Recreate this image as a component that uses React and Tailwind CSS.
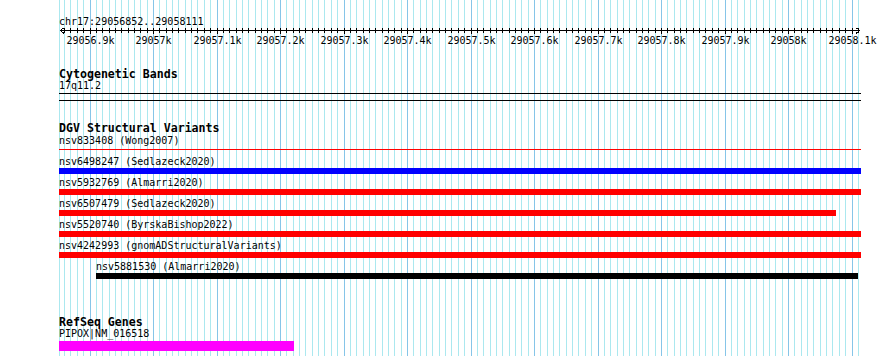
import React from "react";

// 100bp = 63.5px, column of the 29056.9k tick is x=90
const toX = (pos) => Math.floor(90 + (pos - 29056900) * 0.635);

const variants = [
  { id: "nsv6498247", study: "Sedlazeck2020", x1: 59, x2: 861, color: "bg-[#0000ff]" },
  { id: "nsv5932769", study: "Almarri2020", x1: 59, x2: 861, color: "bg-[#ff0000]" },
  { id: "nsv6507479", study: "Sedlazeck2020", x1: 59, x2: 836, color: "bg-[#ff0000]" },
  { id: "nsv5520740", study: "ByrskaBishop2022", x1: 59, x2: 861, color: "bg-[#ff0000]" },
  { id: "nsv4242993", study: "gnomADStructuralVariants", x1: 59, x2: 861, color: "bg-[#ff0000]" },
  { id: "nsv5881530", study: "Almarri2020", x1: 96, x2: 858, color: "bg-black" },
];

const tickLabel = (p) => {
  const k = p / 1000;
  return `${Number.isInteger(k) ? k : k.toFixed(1)}k`;
};

const positions = [];
for (let p = 29056860; p <= 29058110; p += 10) positions.push(p);

const Grid = () => (
  <svg
    className="absolute inset-0 z-0"
    width={890}
    height={356}
    shapeRendering="crispEdges"
  >
    <line x1={59.5} y1={0} x2={59.5} y2={356} stroke="#abe8ef" />
    {positions.map((p) => (
      <line
        key={p}
        x1={toX(p) + 0.5}
        y1={0}
        x2={toX(p) + 0.5}
        y2={356}
        stroke={p % 100 === 0 ? "#86c5e8" : "#abe8ef"}
      />
    ))}
  </svg>
);

const Ruler = () => (
  <svg width={890} height={20} className="block" shapeRendering="crispEdges">
    <line x1={60} y1={2.5} x2={860} y2={2.5} stroke="black" />
    <polyline points="64,-0.5 60.5,2.5 64,5.5" fill="none" stroke="black" />
    <polyline points="856,-0.5 859.5,2.5 856,5.5" fill="none" stroke="black" />
    {positions.map((p) => (
      <line
        key={p}
        x1={toX(p) + 0.5}
        y1={0}
        x2={toX(p) + 0.5}
        y2={p % 100 === 0 ? 6 : 5}
        stroke="black"
      />
    ))}
    {positions
      .filter((p) => p % 100 === 0)
      .map((p) => (
        <text
          key={p}
          x={toX(p) + 0.5}
          y={16}
          textAnchor="middle"
          fontSize={10}
          fontFamily="'DejaVu Sans Mono', monospace"
          fill="black"
          shapeRendering="auto"
        >
          {tickLabel(p)}
        </text>
      ))}
  </svg>
);

const TrackTitle = ({ children, className = "" }) => (
  <div className={`ml-[59px] text-[11.6px] leading-[12px] font-bold ${className}`}>
    {children}
  </div>
);

const Label = ({ children, className = "" }) => (
  <div className={`ml-[59px] text-[10px] leading-[12px] whitespace-nowrap ${className}`}>
    {children}
  </div>
);

export default function App() {
  return (
    <div className="relative w-[890px] h-[356px] overflow-hidden bg-white text-black font-['DejaVu_Sans_Mono',monospace]">
      <Grid />
      <div className="relative z-10 flex flex-col pt-[16px]">
        <Label>chr17:29056852..29058111</Label>
        <Ruler />

        <TrackTitle className="mt-[20px]">Cytogenetic Bands</TrackTitle>
        <Label>17q11.2</Label>
        <div className="ml-[59px] mt-[1px] h-px w-[802px] bg-black" />
        <div className="ml-[59px] mt-[6px] h-px w-[802px] bg-black" />

        <TrackTitle className="mt-[21px]">DGV Structural Variants</TrackTitle>
        <Label className="mt-[1px]">nsv833408 (Wong2007)</Label>
        <div className="ml-[59px] mt-[2px] h-px w-[802px] bg-[#ff0000]" />

        <div className="mt-[6px] flex flex-col">
          {variants.map((v) => (
            <div key={v.id} className="mb-[3px]" style={{ marginLeft: v.x1 }}>
              <div className="text-[10px] leading-[12px] whitespace-nowrap">
                {v.id} ({v.study})
              </div>
              <div className={`h-[6px] ${v.color}`} style={{ width: v.x2 - v.x1 }} />
            </div>
          ))}
        </div>

        <TrackTitle className="mt-[34px]">RefSeq Genes</TrackTitle>
        <Label className="relative -top-px z-10 mt-[1px]">PIPOX|NM_016518</Label>
        <div className="ml-[59px] h-[10px] w-[235px] bg-[#ff00ff]" />
      </div>
    </div>
  );
}
